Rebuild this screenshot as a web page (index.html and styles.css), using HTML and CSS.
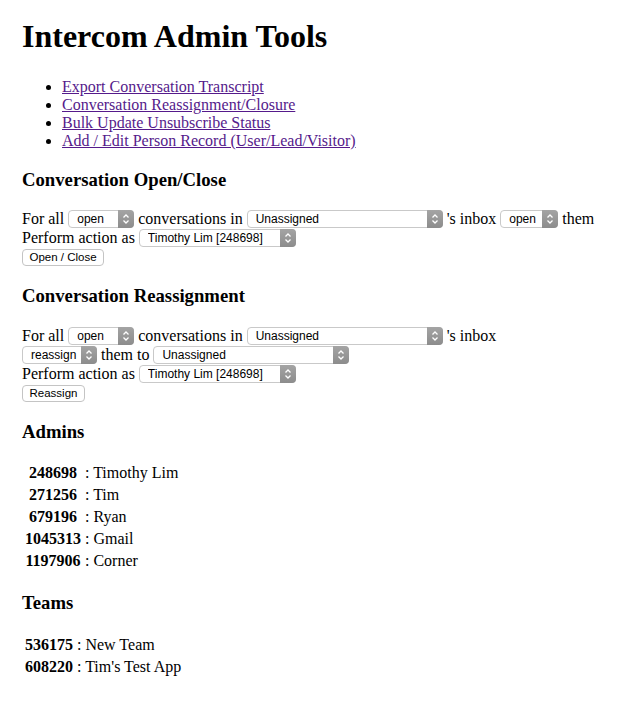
FILE: index.html
```html
<!DOCTYPE html>
<html>
<head>
<meta charset="utf-8">
<title>Intercom Admin Tools</title>
<link rel="stylesheet" href="styles.css">
</head>
<body>
<div class="page">
  <h1>Intercom Admin Tools</h1>
  <ul class="nav">
    <li><a href="#">Export Conversation Transcript</a></li>
    <li><a href="#">Conversation Reassignment/Closure</a></li>
    <li><a href="#">Bulk Update Unsubscribe Status</a></li>
    <li><a href="#">Add / Edit Person Record (User/Lead/Visitor)</a></li>
  </ul>

  <h3>Conversation Open/Close</h3>
  <div class="form">
    For all <span class="sel w-open"><select><option>open</option></select><span class="arr"><svg width="16" height="16" viewBox="0 0 16 16"><path d="M5.5 6.5 L8 4 L10.5 6.5 M5.5 9.5 L8 12 L10.5 9.5" fill="none" stroke="#fff" stroke-width="1.3"/></svg></span></span> conversations in <span class="sel w-inbox"><select><option>Unassigned</option></select><span class="arr"><svg width="16" height="16" viewBox="0 0 16 16"><path d="M5.5 6.5 L8 4 L10.5 6.5 M5.5 9.5 L8 12 L10.5 9.5" fill="none" stroke="#fff" stroke-width="1.3"/></svg></span></span> 's inbox <span class="sel w-open2"><select><option>open</option></select><span class="arr"><svg width="16" height="16" viewBox="0 0 16 16"><path d="M5.5 6.5 L8 4 L10.5 6.5 M5.5 9.5 L8 12 L10.5 9.5" fill="none" stroke="#fff" stroke-width="1.3"/></svg></span></span> them<br>
    Perform action as <span class="sel w-admin"><select><option>Timothy Lim [248698]</option></select><span class="arr"><svg width="16" height="16" viewBox="0 0 16 16"><path d="M5.5 6.5 L8 4 L10.5 6.5 M5.5 9.5 L8 12 L10.5 9.5" fill="none" stroke="#fff" stroke-width="1.3"/></svg></span></span><br>
    <button class="btn w-btn1">Open / Close</button>
  </div>

  <h3>Conversation Reassignment</h3>
  <div class="form">
    For all <span class="sel w-open"><select><option>open</option></select><span class="arr"><svg width="16" height="16" viewBox="0 0 16 16"><path d="M5.5 6.5 L8 4 L10.5 6.5 M5.5 9.5 L8 12 L10.5 9.5" fill="none" stroke="#fff" stroke-width="1.3"/></svg></span></span> conversations in <span class="sel w-inbox"><select><option>Unassigned</option></select><span class="arr"><svg width="16" height="16" viewBox="0 0 16 16"><path d="M5.5 6.5 L8 4 L10.5 6.5 M5.5 9.5 L8 12 L10.5 9.5" fill="none" stroke="#fff" stroke-width="1.3"/></svg></span></span> 's inbox<br>
    <span class="sel w-reassign"><select><option>reassign</option></select><span class="arr"><svg width="16" height="16" viewBox="0 0 16 16"><path d="M5.5 6.5 L8 4 L10.5 6.5 M5.5 9.5 L8 12 L10.5 9.5" fill="none" stroke="#fff" stroke-width="1.3"/></svg></span></span> them to <span class="sel w-inbox"><select><option>Unassigned</option></select><span class="arr"><svg width="16" height="16" viewBox="0 0 16 16"><path d="M5.5 6.5 L8 4 L10.5 6.5 M5.5 9.5 L8 12 L10.5 9.5" fill="none" stroke="#fff" stroke-width="1.3"/></svg></span></span><br>
    Perform action as <span class="sel w-admin"><select><option>Timothy Lim [248698]</option></select><span class="arr"><svg width="16" height="16" viewBox="0 0 16 16"><path d="M5.5 6.5 L8 4 L10.5 6.5 M5.5 9.5 L8 12 L10.5 9.5" fill="none" stroke="#fff" stroke-width="1.3"/></svg></span></span><br>
    <button class="btn w-btn2">Reassign</button>
  </div>

  <h3>Admins</h3>
  <table class="ids">
    <tr><th>248698</th><td>: Timothy Lim</td></tr>
    <tr><th>271256</th><td>: Tim</td></tr>
    <tr><th>679196</th><td>: Ryan</td></tr>
    <tr><th>1045313</th><td>: Gmail</td></tr>
    <tr><th>1197906</th><td>: Corner</td></tr>
  </table>

  <h3>Teams</h3>
  <table class="ids">
    <tr><th>536175</th><td>: New Team</td></tr>
    <tr><th>608220</th><td>: Tim's Test App</td></tr>
  </table>
</div>
</body>
</html>
```

FILE: styles.css
```css
html, body {
  background: #fff;
}
body {
  margin: 8px;
  font-family: "Liberation Serif", "Times New Roman", serif;
  font-size: 16px;
  color: #000;
}
.page {
  padding-left: 14px;
}
h1 {
  font-size: 32px;
  font-weight: bold;
  margin: 10px 0 23px;
}
h3 {
  font-size: 18.72px;
  font-weight: bold;
  margin: 18.72px 0;
}
.nav {
  margin: 16px 0;
  padding-left: 40px;
  line-height: 18px;
}
.nav a {
  color: #551a8b;
  text-decoration: underline;
}
.form {
  line-height: 19px;
}
.sel {
  display: inline-flex;
  vertical-align: 1px;
  height: 18px;
  line-height: normal;
}
.sel select {
  -webkit-appearance: none;
  appearance: none;
  box-sizing: border-box;
  height: 18px;
  margin: 0;
  padding: 0 18px 0 8px;
  border: 1px solid #c9c9c9;
  border-radius: 4px;
  background: #fff;
  font-family: "Liberation Sans", Arial, sans-serif;
  font-size: 12px;
  color: #000;
  width: 100%;
}
.sel .arr {
  display: inline-flex;
  align-items: center;
  justify-content: center;
  flex: none;
  width: 16px;
  height: 18px;
  margin-left: -16px;
  border-radius: 0 4px 4px 0;
  background: linear-gradient(#a4a4a4, #8c8c8c);
  pointer-events: none;
}
.w-open { width: 66px; }
.w-inbox { width: 196px; }
.w-open2 { width: 58px; }
.w-admin { width: 157px; }
.w-reassign { width: 75px; }
.btn {
  box-sizing: border-box;
  height: 17px;
  margin: 2px 0 0;
  padding: 0 4px;
  border: 1px solid #c4c4c4;
  border-radius: 4px;
  background: #fff;
  font-family: "Liberation Sans", Arial, sans-serif;
  font-size: 11.5px;
  color: #000;
  line-height: 15px;
  white-space: nowrap;
  vertical-align: top;
}
.w-btn1 { width: 82px; }
.w-btn2 { width: 63px; }
.ids {
  border-spacing: 2px;
  margin-left: 0;
}
.ids th, .ids td {
  padding: 1px;
  line-height: 18px;
}
.ids th {
  font-weight: bold;
  text-align: center;
}
.ids td {
  text-align: left;
}
```
